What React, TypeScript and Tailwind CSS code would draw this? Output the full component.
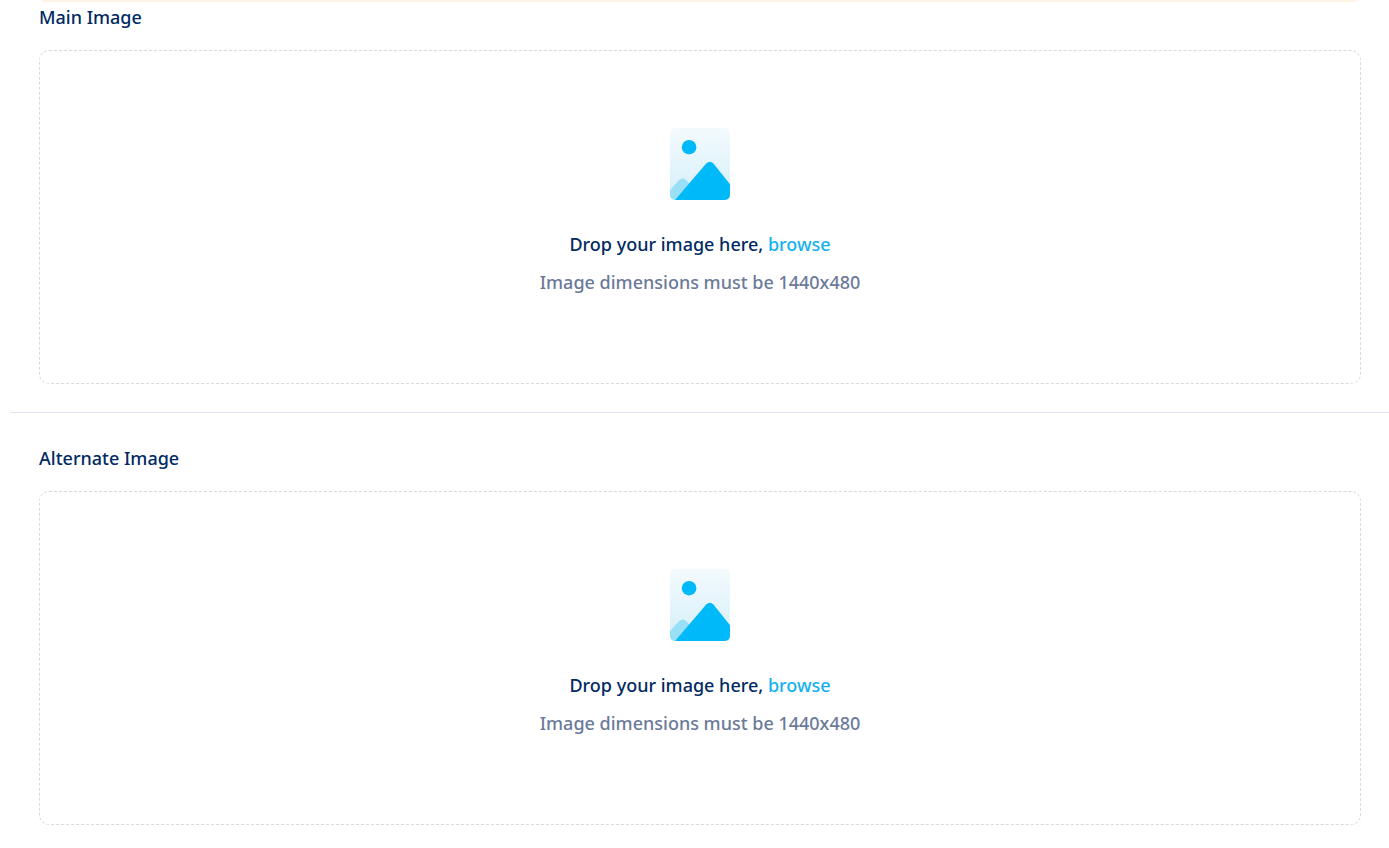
import { useId, useRef, useState } from 'react';
import type { DragEvent } from 'react';

interface ImageDropzoneProps {
  title: string;
  dimensions: string;
}

function PictureIcon() {
  const id = useId();

  return (
    <svg width="60" height="72" viewBox="0 0 60 72" fill="none" aria-hidden="true">
      <defs>
        <linearGradient id={`${id}-sky`} x1="30" y1="0" x2="30" y2="72" gradientUnits="userSpaceOnUse">
          <stop stopColor="#F3FAFD" />
          <stop offset="1" stopColor="#D6EFFA" />
        </linearGradient>
        <clipPath id={`${id}-page`}>
          <rect width="60" height="72" rx="5" />
        </clipPath>
      </defs>
      <g clipPath={`url(#${id}-page)`}>
        <rect width="60" height="72" fill={`url(#${id}-sky)`} />
        <path d="M0 62L9 52.3Q12.3 49 15.8 52L19.5 55.5L5 72H0Z" fill="#99DFF5" />
        <path d="M5 72L36.2 35.6Q39.8 32.2 43.4 35.4L60 56.3V72Z" fill="#00B9F8" />
        <circle cx="19.1" cy="19.2" r="7.3" fill="#00B9F8" />
      </g>
    </svg>
  );
}

function ImageDropzone({ title, dimensions }: ImageDropzoneProps) {
  const inputRef = useRef<HTMLInputElement>(null);
  const [dragging, setDragging] = useState(false);

  const handleDrop = (e: DragEvent<HTMLDivElement>) => {
    e.preventDefault();
    setDragging(false);
    if (inputRef.current && e.dataTransfer.files.length) {
      inputRef.current.files = e.dataTransfer.files;
    }
  };

  return (
    <section className="pl-[29px] pr-7">
      <h2 className="mb-[21px] text-lg/6 font-medium text-[#012a63]">{title}</h2>
      <div
        onDragOver={(e) => {
          e.preventDefault();
          setDragging(true);
        }}
        onDragLeave={() => setDragging(false)}
        onDrop={handleDrop}
        className={`flex flex-col items-center rounded-[10px] border border-dashed border-[#d8d9e0] pt-[77px] pb-[89px] text-lg/6 font-medium ${
          dragging ? 'bg-sky-50' : 'bg-white'
        }`}
      >
        <PictureIcon />
        <p className="mt-8 text-[#012a63]">
          Drop your image here,{' '}
          <button
            type="button"
            onClick={() => inputRef.current?.click()}
            className="cursor-pointer text-[#14b1f0] hover:underline"
          >
            browse
          </button>
        </p>
        <p className="mt-3.5 text-[#6b7a99]">Image dimensions must be {dimensions}</p>
        <input ref={inputRef} type="file" accept="image/*" aria-label={title} className="hidden" />
      </div>
    </section>
  );
}

export default function App() {
  return (
    <main className="bg-white pb-6 pl-2.5 font-['Noto_Sans','Open_Sans',sans-serif]">
      <div className="mr-8 ml-8 h-0.5 rounded-b-lg bg-[#fff3e6]" />
      <div className="pt-[3px]">
        <ImageDropzone title="Main Image" dimensions="1440x480" />
      </div>
      <hr className="mt-7 mb-[33px] border-[#dfe5f0]" />
      <ImageDropzone title="Alternate Image" dimensions="1440x480" />
    </main>
  );
}
